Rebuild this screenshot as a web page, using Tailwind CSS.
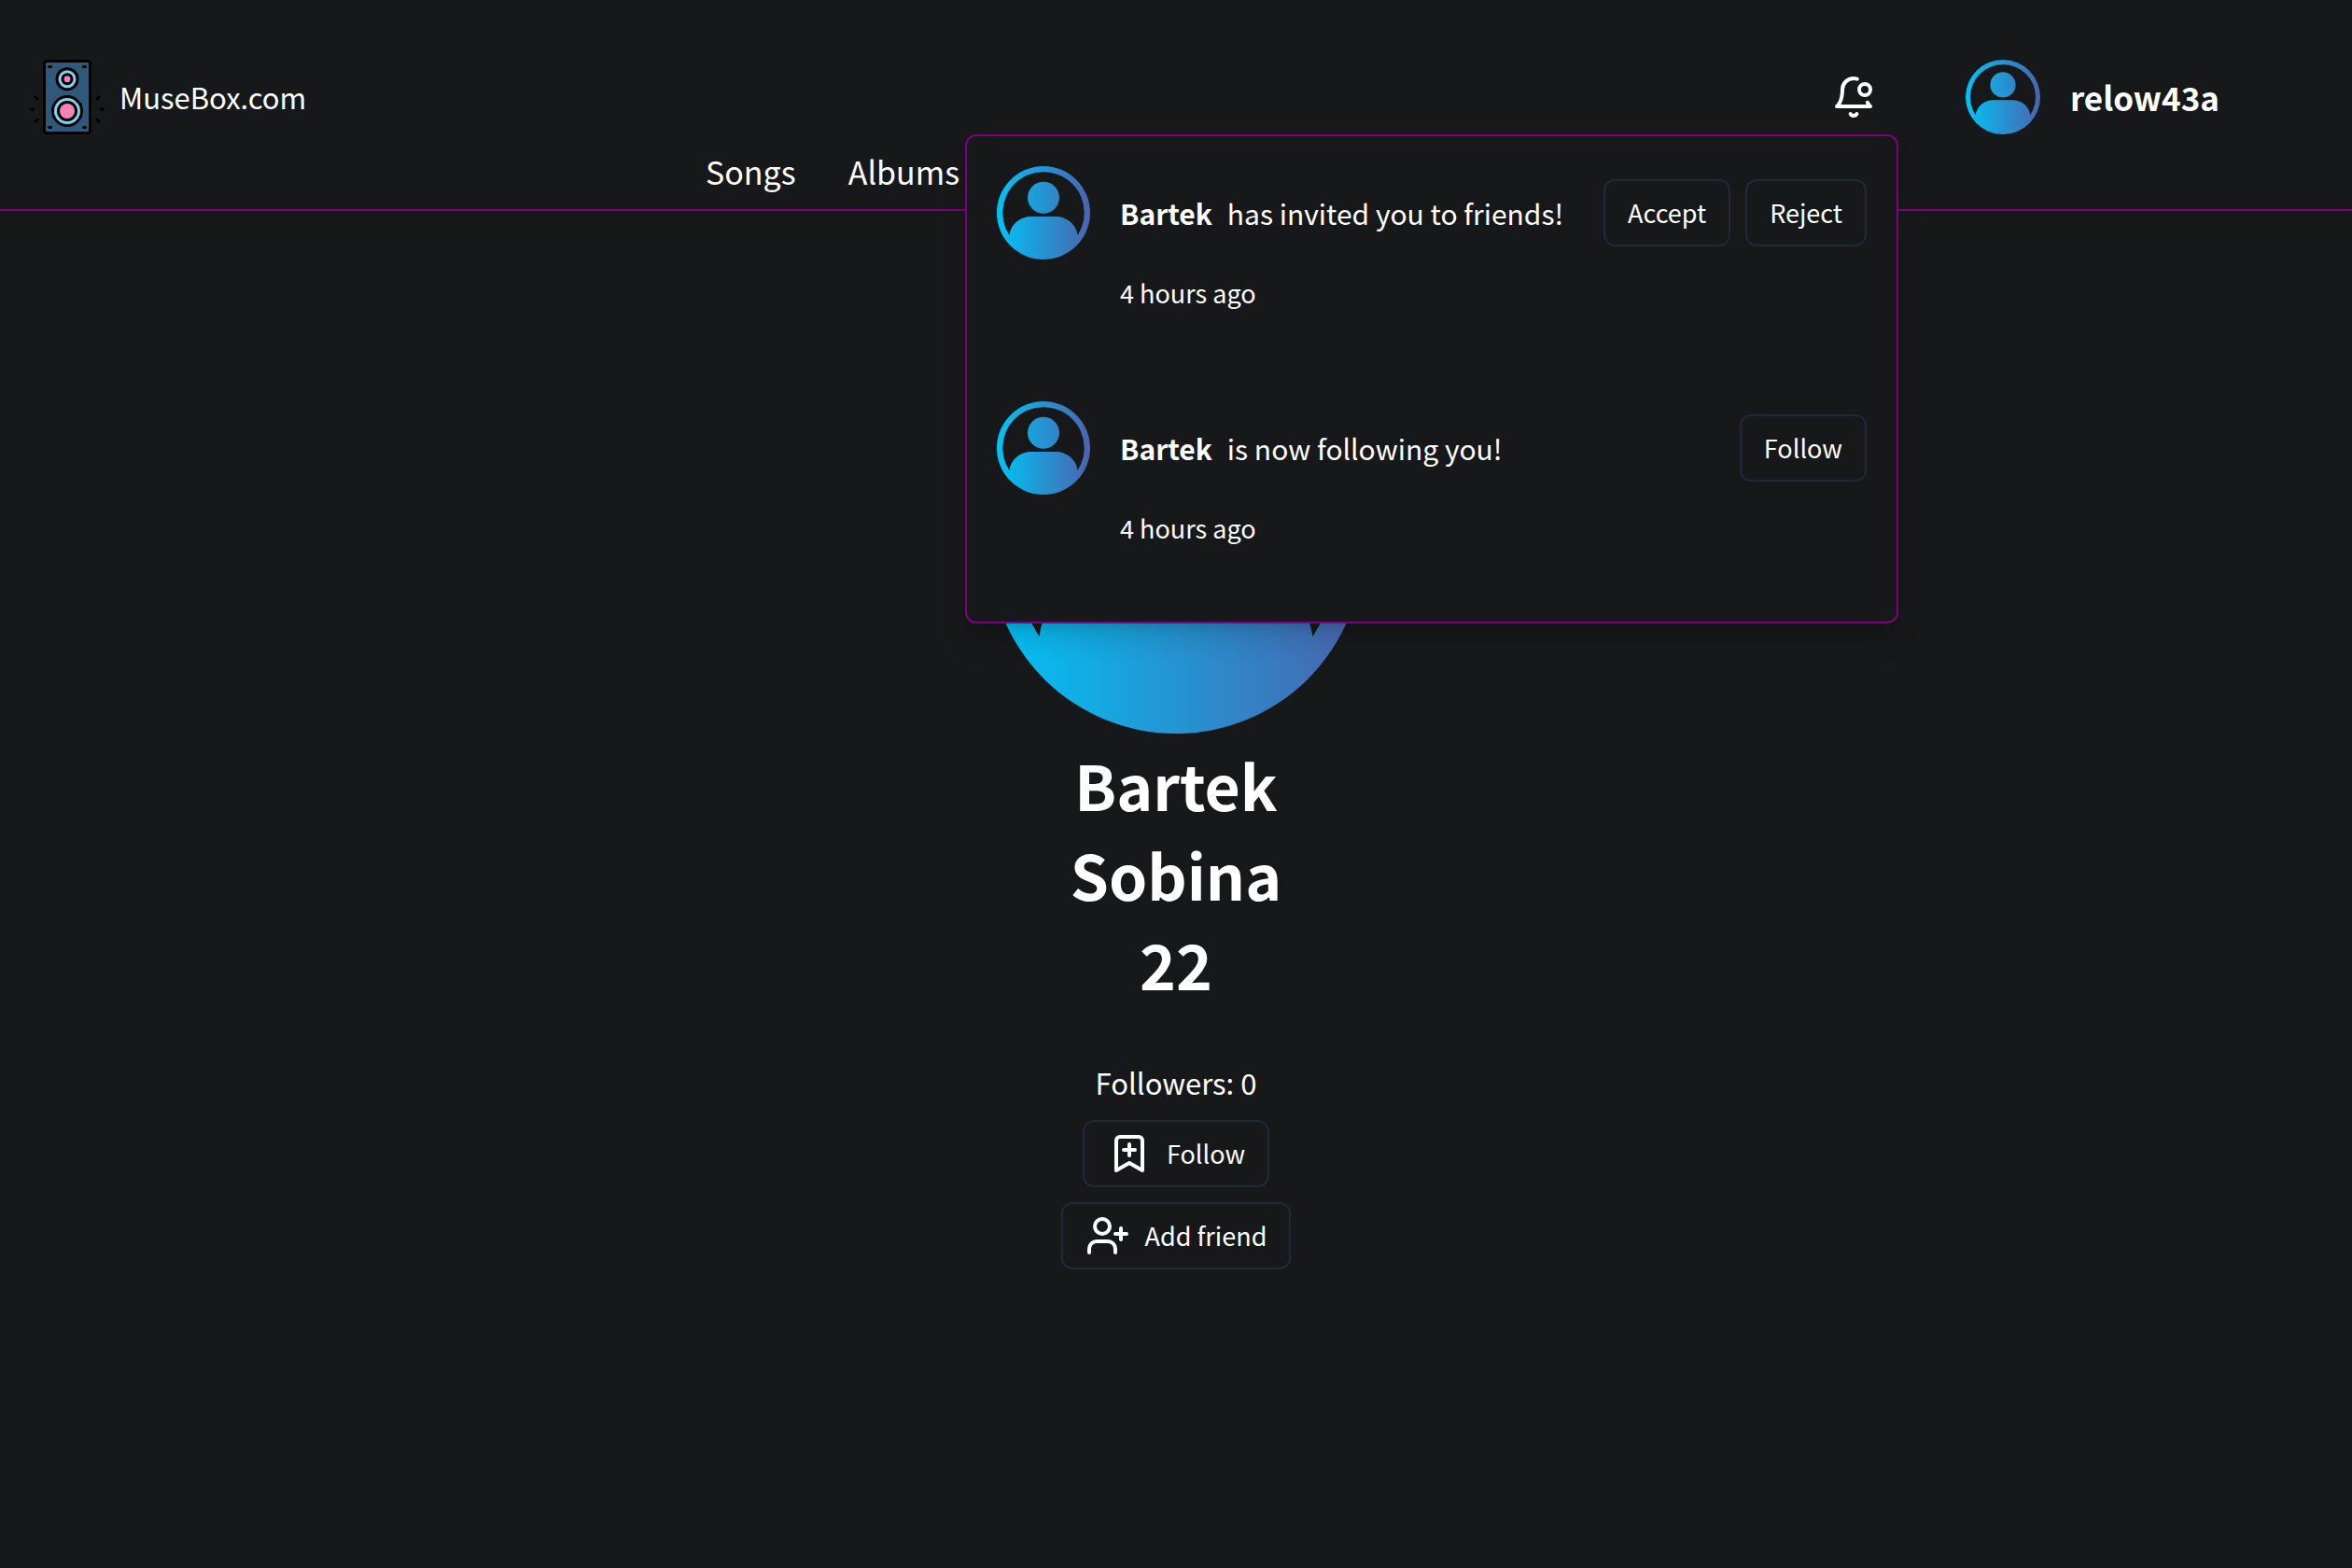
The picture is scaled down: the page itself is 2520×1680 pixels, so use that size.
<!DOCTYPE html>
<html lang="en">
<head>
<meta charset="utf-8">
<meta name="viewport" content="width=device-width, initial-scale=1">
<title>MuseBox.com</title>
<script src="https://cdn.jsdelivr.net/npm/@tailwindcss/browser@4"></script>
</head>
<body class="min-h-screen bg-[#17181a] font-['Noto_Sans_CJK_SC','Noto_Sans',sans-serif] text-[31px] leading-[48px] text-white">

<!-- Shared avatar symbol -->
<svg class="absolute size-0" aria-hidden="true">
  <defs>
    <linearGradient id="avatar-fill" gradientUnits="userSpaceOnUse" x1="0" y1="0" x2="100" y2="0">
      <stop offset="0" stop-color="#00c4f6"/>
      <stop offset="1" stop-color="#4a64ae"/>
    </linearGradient>
    <symbol id="avatar" viewBox="0 0 100 100">
      <g fill="url(#avatar-fill)">
        <path fill-rule="evenodd" d="M50 0a50 50 0 1 0 0 100a50 50 0 1 0 0-100zM50 6.25a43.75 43.75 0 1 1 0 87.5a43.75 43.75 0 1 1 0-87.5z"/>
        <circle cx="50" cy="33.7" r="17"/>
        <path d="M13.400 74C15 62 25 54 37 54H63C75 54 85 62 86.600 74L89.600 77A48 48 0 0 1 10.400 77z"/>
      </g>
    </symbol>
  </defs>
</svg>

<header class="border-b-2 border-[#800080] pt-16">
  <div class="flex h-20 items-center justify-between pr-[142px] pl-8">
    <a href="#" class="flex items-center gap-4">
      <svg class="size-20" viewBox="0 0 80 80" aria-hidden="true">
        <rect x="15.5" y="1.5" width="49" height="77" rx="3" fill="#30587a" stroke="#000" stroke-width="3"/>
        <g stroke="#000" stroke-width="3" stroke-linecap="round">
          <path d="M20.600 7.500h2M57.500 7.500h2M20.600 72.500h2M57.500 72.500h2"/>
          <path d="M1.800 53h2M6 39.700l2 2M6 66.300l2-2M76.200 53h2M74 39.700l-2 2M74 66.300l-2-2"/>
        </g>
        <circle cx="40" cy="20.700" r="12.500"/>
        <circle cx="40" cy="20.700" r="9.500" fill="#84d0f0"/>
        <circle cx="40" cy="20.700" r="6.500"/>
        <circle cx="40" cy="20.700" r="3.400" fill="#f783b4"/>
        <circle cx="40" cy="55" r="17"/>
        <circle cx="40" cy="55" r="14" fill="#84d0f0"/>
        <circle cx="40" cy="55" r="11"/>
        <circle cx="40" cy="55" r="8" fill="#f783b4"/>
        <path d="M49 41.500l6 6" stroke="#30587a" stroke-width="3"/>
        <path d="M49.500 43l2 2M53.500 47l1 1" stroke="#000" stroke-width="3" stroke-linecap="round"/>
      </svg>
      <span>MuseBox.com</span>
    </a>

    <div class="flex items-center gap-12">
      <div class="relative">
        <button type="button" aria-label="Notifications" aria-expanded="true" class="flex h-18 items-center px-6">
          <svg class="size-12" viewBox="0 0 24 24" fill="none" stroke="currentColor" stroke-width="2" stroke-linecap="round" stroke-linejoin="round" aria-hidden="true">
            <path d="M19.400 14.900C20.200 16.400 21 17 21 17H3s3-2 3-9c0-3.300 2.700-6 6-6 .7 0 1.300.1 1.900.3"/>
            <path d="M10.300 21a1.940 1.940 0 0 0 3.400 0"/>
            <circle cx="18" cy="8" r="3"/>
          </svg>
        </button>

        <!-- Notifications menu -->
        <ul class="absolute top-full right-0 z-10 mt-1 flex w-[1000px] flex-col gap-12 rounded-xl border-2 border-[#800080] bg-[#17181a] p-8 shadow-[0_20px_30px_-6px_rgba(0,0,0,0.15),0_8px_12px_-8px_rgba(0,0,0,0.15)]">
          <li class="flex h-51 gap-8">
            <svg class="size-25 shrink-0" aria-hidden="true"><use href="#avatar"/></svg>
            <div class="flex flex-1 flex-col gap-3">
              <div class="flex h-25 items-center justify-between">
                <p class="flex gap-4 text-[30px]"><b>Bartek</b><span>has invited you to friends!</span></p>
                <div class="flex gap-4 text-[27px]">
                  <button type="button" class="h-18 rounded-xl border-2 border-[#1e293b] px-6">Accept</button>
                  <button type="button" class="h-18 rounded-xl border-2 border-[#1e293b] px-6">Reject</button>
                </div>
              </div>
              <p class="text-[27px]">4 hours ago</p>
            </div>
          </li>
          <li class="flex h-51 gap-8">
            <svg class="size-25 shrink-0" aria-hidden="true"><use href="#avatar"/></svg>
            <div class="flex flex-1 flex-col gap-3">
              <div class="flex h-25 items-center justify-between">
                <p class="flex gap-4 text-[30px]"><b>Bartek</b><span>is now following you!</span></p>
                <div class="flex gap-4 text-[27px]">
                  <button type="button" class="h-18 rounded-xl border-2 border-[#1e293b] px-6">Follow</button>
                </div>
              </div>
              <p class="text-[27px]">4 hours ago</p>
            </div>
          </li>
        </ul>
      </div>

      <a href="#" class="flex items-center gap-8 pl-6">
        <svg class="size-20" aria-hidden="true"><use href="#avatar"/></svg>
        <b class="text-[35px]">relow43a</b>
      </a>
    </div>
  </div>

  <nav class="mx-auto flex h-20 w-2/5 items-center gap-14 text-[34px]">
    <a href="#">Songs</a>
    <a href="#">Albums</a>
  </nav>
</header>

<main class="flex flex-col items-center pt-40">
  <svg class="size-100" aria-hidden="true"><use href="#avatar"/></svg>
  <h1 class="mt-1.5 flex flex-col items-center text-[66px] leading-24 font-bold">
    <span>Bartek</span>
    <span>Sobina</span>
    <span>22</span>
  </h1>
  <p class="mt-14 mb-4">Followers: 0</p>
  <div class="flex flex-col items-center gap-4 text-[27px]">
    <button type="button" class="flex h-18 items-center gap-4 rounded-xl border-2 border-[#1e293b] px-6">
      <svg class="size-12" viewBox="0 0 24 24" fill="none" stroke="currentColor" stroke-width="2" stroke-linecap="round" stroke-linejoin="round" aria-hidden="true">
        <path d="m19 21-7-4-7 4V5a2 2 0 0 1 2-2h10a2 2 0 0 1 2 2v16zM12 7v6M15 10H9"/>
      </svg>
      Follow
    </button>
    <button type="button" class="flex h-18 items-center gap-4 rounded-xl border-2 border-[#1e293b] px-6">
      <svg class="size-12" viewBox="0 0 24 24" fill="none" stroke="currentColor" stroke-width="2" stroke-linecap="round" stroke-linejoin="round" aria-hidden="true">
        <path d="M16 21v-2a4 4 0 0 0-4-4H6a4 4 0 0 0-4 4v2"/>
        <circle cx="9" cy="7" r="4"/>
        <path d="M19 8v6M22 11h-6"/>
      </svg>
      Add friend
    </button>
  </div>
</main>
</body>
</html>
